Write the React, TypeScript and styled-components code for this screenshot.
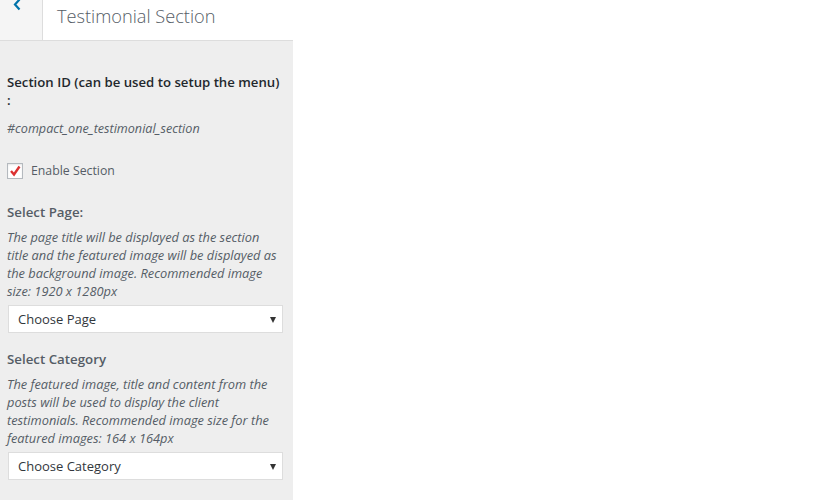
import React, { FC } from 'react';
import styled, { createGlobalStyle } from 'styled-components';

const GlobalStyle = createGlobalStyle`
  html, body {
    margin: 0;
    padding: 0;
    background: #fff;
  }
  body {
    font-family: "Open Sans", "Noto Sans", sans-serif;
    -webkit-font-smoothing: antialiased;
  }
`;

const StyledSidebar = styled.div`
  width: 293px;
  height: 500px;
  background: #eee;
  display: flex;
  flex-direction: column;
  overflow: hidden;
`;

const StyledHeader = styled.div`
  display: flex;
  height: 40px;
  background: #fff;
  border-bottom: 1px solid #ddd;
`;

const StyledBack = styled.button`
  width: 43px;
  height: 40px;
  padding: 0;
  border: 0;
  border-right: 1px solid #ddd;
  background: #f5f5f5;
  display: block;
  svg {
    display: block;
  }
`;

const StyledTitle = styled.h3`
  margin: 0;
  padding: 4px 0 0 14px;
  font-size: 18.2px;
  font-weight: 300;
  line-height: 24px;
  color: #555d66;
`;

const StyledBody = styled.div`
  padding: 32px 10px 0 7px;
  display: flex;
  flex-direction: column;
`;

const StyledIdLabel = styled.div`
  font-size: 13.2px;
  font-weight: 600;
  line-height: 18px;
  color: #23282d;
  margin-bottom: 12px;
`;

const StyledIdValue = styled.div`
  font-size: 12.6px;
  font-style: italic;
  line-height: 16px;
  color: #555d66;
  margin-bottom: 26px;
`;

const StyledCheckRow = styled.label`
  display: flex;
  align-items: center;
  gap: 8px;
  font-size: 12.3px;
  line-height: 16px;
  color: #555d66;
  margin-bottom: 24px;
`;

const StyledCheckbox = styled.span`
  width: 14px;
  height: 14px;
  border: 1px solid #b4b9be;
  background: #fff;
  box-shadow: inset 0 1px 2px rgba(0, 0, 0, 0.1);
  display: flex;
  align-items: center;
  justify-content: center;
`;

const StyledFieldTitle = styled.div`
  font-size: 13.3px;
  font-weight: 600;
  line-height: 18px;
  color: #555d66;
  margin-bottom: 7px;
`;

const StyledDescription = styled.div`
  font-size: 12.8px;
  font-style: italic;
  line-height: 18px;
  color: #555d66;
  margin-bottom: 5px;
`;

const StyledSelect = styled.div<{ gap: number }>`
  position: relative;
  height: 26px;
  margin-left: 1px;
  border: 1px solid #ddd;
  background: #fff;
  display: flex;
  align-items: center;
  padding-left: 9px;
  font-size: 13px;
  color: #32373c;
  margin-bottom: ${({ gap }) => gap}px;
  &::after {
    content: '';
    position: absolute;
    right: 6px;
    top: 11px;
    border-left: 3.5px solid transparent;
    border-right: 3.5px solid transparent;
    border-top: 6px solid #333;
  }
`;

const fields = [
  {
    title: 'Select Page:',
    description:
      'The page title will be displayed as the section title and the featured image will be displayed as the background image. Recommended image size: 1920 x 1280px',
    placeholder: 'Choose Page',
  },
  {
    title: 'Select Category',
    description:
      'The featured image, title and content from the posts will be used to display the client testimonials. Recommended image size for the featured images: 164 x 164px',
    placeholder: 'Choose Category',
  },
];

const App: FC = () => (
  <>
    <GlobalStyle />
    <StyledSidebar>
      <StyledHeader>
        <StyledBack aria-label="Back">
          <svg width="42" height="40" viewBox="0 0 42 40">
            <path d="M19.5 -0.5 L15 4.5 L19.5 9.5" fill="none" stroke="#0073aa" strokeWidth="2.2" />
          </svg>
        </StyledBack>
        <StyledTitle>Testimonial Section</StyledTitle>
      </StyledHeader>
      <StyledBody>
        <StyledIdLabel>
          Section ID (can be used to setup the menu)
          <br />:
        </StyledIdLabel>
        <StyledIdValue>#compact_one_testimonial_section</StyledIdValue>
        <StyledCheckRow>
          <StyledCheckbox>
            <svg width="12" height="12" viewBox="0 0 12 12">
              <path d="M2 6 L5 9.5 L10.5 1.5" fill="none" stroke="#dc3232" strokeWidth="2.4" />
            </svg>
          </StyledCheckbox>
          Enable Section
        </StyledCheckRow>
        {fields.map((field, i) => (
          <React.Fragment key={field.title}>
            <StyledFieldTitle>{field.title}</StyledFieldTitle>
            <StyledDescription>{field.description}</StyledDescription>
            <StyledSelect gap={i === 0 ? 17 : 0}>{field.placeholder}</StyledSelect>
          </React.Fragment>
        ))}
      </StyledBody>
    </StyledSidebar>
  </>
);

export default App;
